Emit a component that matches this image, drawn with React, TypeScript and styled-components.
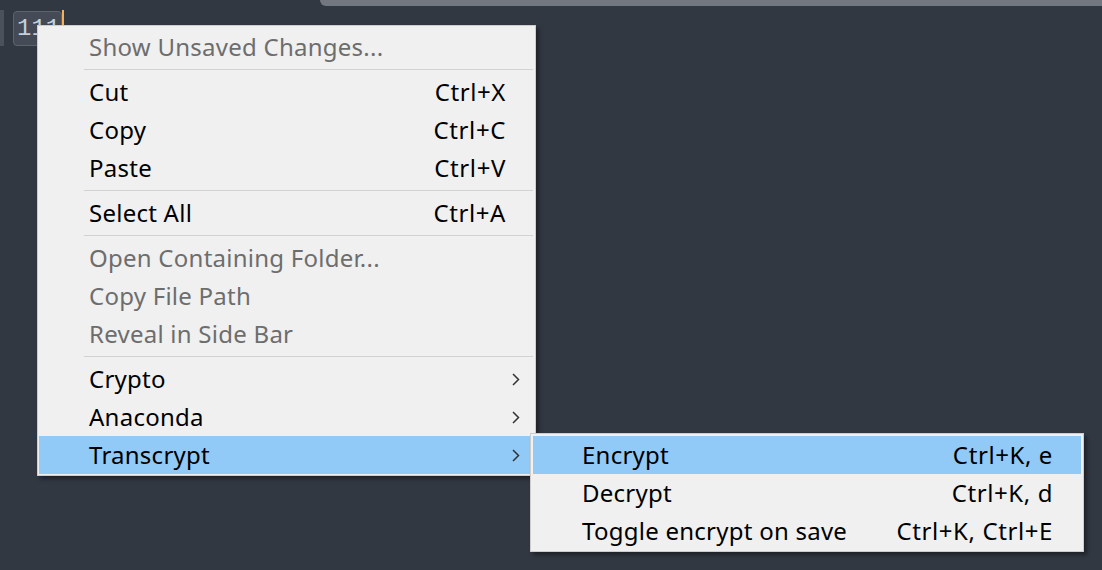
import React from 'react';
import styled, { createGlobalStyle } from 'styled-components';

const GlobalStyle = createGlobalStyle`
  html, body {
    margin: 0;
    padding: 0;
    background: #323842;
  }
  * { box-sizing: border-box; }
`;

const Screen = styled.div`
  position: relative;
  width: 1102px;
  height: 570px;
  overflow: hidden;
  background: #323842;
  font-family: "Noto Sans", "Open Sans", sans-serif;
`;

const TopBar = styled.div`
  margin-left: 320px;
  height: 6px;
  background: #737780;
  border-bottom-left-radius: 7px;
`;

const Line = styled.div`
  display: flex;
  align-items: stretch;
  height: 36px;
  margin-top: 4px;
`;

const GutterMark = styled.div`
  width: 4px;
  background: #4a515b;
`;

const Token = styled.div`
  margin-left: 9px;
  margin-top: 1px;
  width: 49px;
  border: 1px solid #5c636d;
  border-radius: 4px;
  background: #444b56;
  color: #c3cfdc;
  font-family: "Liberation Mono", "DejaVu Sans Mono", monospace;
  font-size: 24px;
  line-height: 34px;
  padding-left: 3px;
`;

const Cursor = styled.div`
  width: 2px;
  background: #f9ae58;
`;

const Menu = styled.div<{ $width: number }>`
  position: absolute;
  width: ${p => p.$width}px;
  background: #f0f0f0;
  border: 1px solid #cdcdcd;
  padding: 2px 2px 1px 1px;
  box-shadow: 3px 3px 4px rgba(0, 0, 0, 0.4);
  display: flex;
  flex-direction: column;
`;

const MainMenu = styled(Menu)`
  left: 37px;
  top: 25px;
`;

const SubMenu = styled(Menu)`
  left: 491px;
  top: -3px;
  padding: 2px 2px 1px 2px;
  z-index: 2;
`;

const Item = styled.div<{ $disabled?: boolean; $active?: boolean; $padL: number; $padR: number }>`
  position: relative;
  display: flex;
  align-items: center;
  justify-content: space-between;
  height: 38px;
  padding: 0 ${p => p.$padR}px 0 ${p => p.$padL}px;
  font-size: 24px;
  letter-spacing: 0.25px;
  color: ${p => (p.$disabled ? '#6d6d6d' : '#000')};
  background: ${p => (p.$active ? '#91c9f7' : 'transparent')};
  white-space: nowrap;
`;

const Label = styled.span`
  padding-bottom: 1px;
`;

const Shortcut = styled.span`
  padding-bottom: 1px;
  letter-spacing: 0.6px;
`;

const Separator = styled.div`
  height: 7px;
  display: flex;
  align-items: center;
  padding-left: 45px;
  &::after {
    content: '';
    flex: 1;
    height: 1px;
    background: #d2d2d2;
  }
`;

const Chevron = () => (
  <svg width="8" height="13" viewBox="0 0 8 13" style={{ marginRight: -7 }}>
    <path d="M1 1 L6.5 6.5 L1 12" fill="none" stroke="#333" strokeWidth="1.5" />
  </svg>
);

type Entry = { label: string; key?: string; disabled?: boolean; sub?: boolean; active?: boolean } | 'sep';

const mainEntries: Entry[] = [
  { label: 'Show Unsaved Changes...', disabled: true },
  'sep',
  { label: 'Cut', key: 'Ctrl+X' },
  { label: 'Copy', key: 'Ctrl+C' },
  { label: 'Paste', key: 'Ctrl+V' },
  'sep',
  { label: 'Select All', key: 'Ctrl+A' },
  'sep',
  { label: 'Open Containing Folder...', disabled: true },
  { label: 'Copy File Path', disabled: true },
  { label: 'Reveal in Side Bar', disabled: true },
  'sep',
  { label: 'Crypto', sub: true },
  { label: 'Anaconda', sub: true },
  { label: 'Transcrypt', sub: true, active: true },
];

const subEntries = [
  { label: 'Encrypt', key: 'Ctrl+K, e', active: true },
  { label: 'Decrypt', key: 'Ctrl+K, d' },
  { label: 'Toggle encrypt on save', key: 'Ctrl+K, Ctrl+E' },
];

export default function App() {
  return (
    <Screen>
      <GlobalStyle />
      <TopBar />
      <Line>
        <GutterMark />
        <Token>111</Token>
        <Cursor />
      </Line>

      <MainMenu $width={499}>
        {mainEntries.map((e, i) =>
          e === 'sep' ? (
            <Separator key={i} />
          ) : (
            <Item key={i} $disabled={e.disabled} $active={e.active} $padL={50} $padR={e.sub ? 20 : 27}>
              <Label>{e.label}</Label>
              {e.key && <Shortcut>{e.key}</Shortcut>}
              {e.sub && <Chevron />}
              {e.active && (
                <SubMenu $width={554}>
                  {subEntries.map(s => (
                    <Item key={s.label} $active={s.active} $padL={49} $padR={28}>
                      <Label>{s.label}</Label>
                      <Shortcut>{s.key}</Shortcut>
                    </Item>
                  ))}
                </SubMenu>
              )}
            </Item>
          )
        )}
      </MainMenu>
    </Screen>
  );
}
